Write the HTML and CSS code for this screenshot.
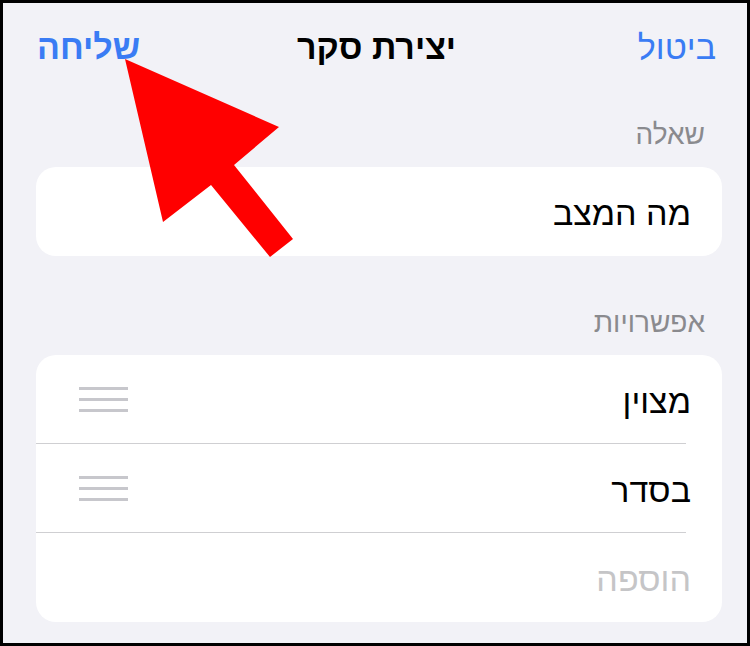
FILE: index.html
```html
<!DOCTYPE html>
<html lang="he" dir="rtl">
<head>
<meta charset="utf-8">
<link rel="stylesheet" href="styles.css">
</head>
<body>
<div class="frame">
  <header class="nav">
    <span class="nav-btn cancel">ביטול</span>
    <span class="nav-title">יצירת סקר</span>
    <span class="nav-btn send">שליחה</span>
  </header>

  <div class="section-label first">שאלה</div>
  <div class="card">
    <div class="row single"><span class="row-text">מה המצב</span></div>
  </div>

  <div class="section-label second">אפשרויות</div>
  <div class="card">
    <div class="row">
      <span class="row-text">מצוין</span>
      <span class="handle"><i></i><i></i><i></i></span>
    </div>
    <div class="sep"></div>
    <div class="row">
      <span class="row-text">בסדר</span>
      <span class="handle"><i></i><i></i><i></i></span>
    </div>
    <div class="sep"></div>
    <div class="row last"><span class="row-text placeholder">הוספה</span></div>
  </div>

  <svg class="arrow" width="750" height="646" viewBox="0 0 750 646" aria-hidden="true">
    <polygon points="125,59 279,127 234,165 293,239 270,257 211,185 163,222" fill="#ff0000"/>
  </svg>
</div>
</body>
</html>
```

FILE: styles.css
```css
* { box-sizing: border-box; }
html, body { margin: 0; padding: 0; }
body {
  font-family: "Liberation Sans", "DejaVu Sans", Arial, sans-serif;
  background: #000;
}
.frame {
  position: relative;
  width: 750px;
  height: 646px;
  border: 3px solid #000;
  background: #f2f2f7;
  overflow: hidden;
  direction: rtl;
}
.nav {
  display: grid;
  grid-template-columns: 1fr auto 1fr;
  align-items: center;
  height: 88px;
  padding: 0 31px 0 34px;
}
.nav-btn {
  font-size: 34px;
  color: #3a7cf4;
}
.cancel { justify-self: start; }
.send { justify-self: end; font-weight: bold; }
.nav-title {
  font-size: 34px;
  font-weight: bold;
  color: #000;
}
.section-label {
  height: 32px;
  line-height: 32px;
  font-size: 28px;
  color: #8a8a8e;
  padding-right: 42px;
  margin-bottom: 16px;
}
.section-label.first { margin-top: 28px; }
.section-label.second { margin-top: 51px; }
.card {
  background: #fff;
  border-radius: 20px;
  margin: 0 25px 0 33px;
  overflow: hidden;
}
.row {
  height: 88px;
  display: flex;
  align-items: center;
  justify-content: space-between;
  padding: 4px 31px 0 43px;
}
.row.single, .row.last { height: 89px; }
.row-text {
  font-size: 34px;
  color: #000;
}
.placeholder { color: #c5c5c7; }
.sep {
  height: 1px;
  background: #cfcfd2;
  margin-right: 36px;
}
.handle {
  display: flex;
  flex-direction: column;
  gap: 8px;
  width: 49px;
  margin-top: -4px;
}
.handle i {
  display: block;
  height: 3px;
  background: #c7c7cc;
}
.arrow {
  position: absolute;
  left: -3px;
  top: -3px;
  pointer-events: none;
}
```
